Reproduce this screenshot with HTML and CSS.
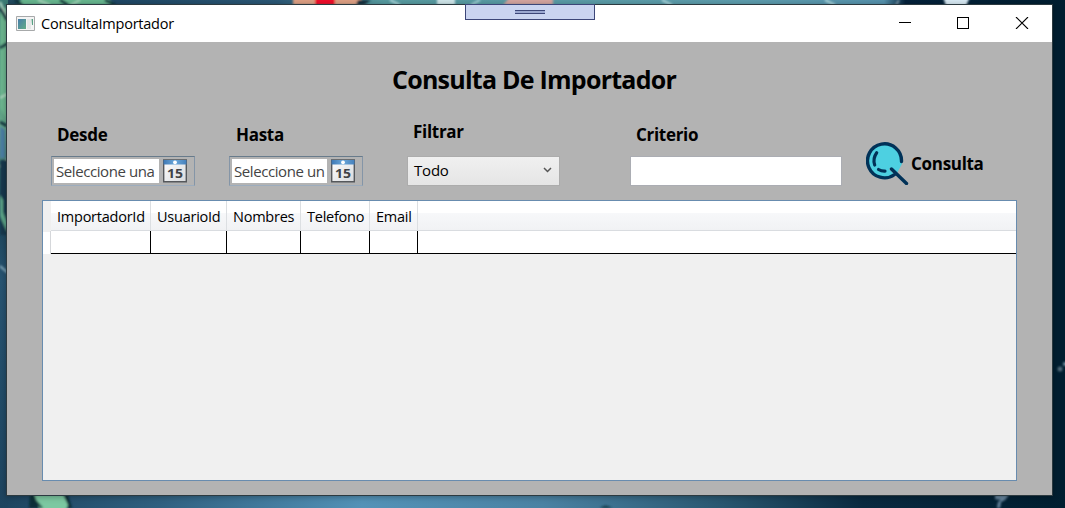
FILE: index.html
```html
<!DOCTYPE html>
<html lang="es">
<head>
<meta charset="utf-8">
<title>ConsultaImportador</title>
<link rel="stylesheet" href="styles.css">
</head>
<body>
<svg class="wallpaper" viewBox="0 0 1065 508" aria-hidden="true">
  <defs>
    <linearGradient id="top"><stop offset="0" stop-color="#234b5e"/><stop offset=".1" stop-color="#1e4663"/><stop offset=".26" stop-color="#2b5876"/><stop offset=".36" stop-color="#579ba0"/><stop offset=".7" stop-color="#5d9dad"/><stop offset=".83" stop-color="#5692ad"/><stop offset=".85" stop-color="#04223b"/><stop offset="1" stop-color="#001e30"/></linearGradient>
    <linearGradient id="bottom"><stop offset="0" stop-color="#1d445f"/><stop offset=".15" stop-color="#2f6080"/><stop offset=".34" stop-color="#5392b7"/><stop offset=".51" stop-color="#4a82a3"/><stop offset=".68" stop-color="#28566f"/><stop offset=".81" stop-color="#0a2a40"/><stop offset="1" stop-color="#001e30"/></linearGradient>
    <linearGradient id="left" x2="0" y2="1"><stop offset="0" stop-color="#3c7a74"/><stop offset=".25" stop-color="#65a889"/><stop offset=".42" stop-color="#1b4257"/><stop offset=".55" stop-color="#275472"/><stop offset="1" stop-color="#1d445f"/></linearGradient>
    <filter id="soft"><feGaussianBlur stdDeviation="1"/></filter>
  </defs>
  <rect width="1065" height="508" fill="#001e30"/>
  <rect width="1065" height="6" fill="url(#top)"/>
  <rect y="490" width="1065" height="18" fill="url(#bottom)"/>
  <rect width="8" height="508" fill="url(#left)"/>
  <g filter="url(#soft)">
    <path d="M0 8h7v112L0 108z" fill="#6db790"/>
    <path d="M0 2l8 18M0 98l7-4M0 167l8-8" stroke="#b7dcc7" stroke-width="2"/>
    <path d="M0 8l7 12M0 48l8-5M0 122l7 4" stroke="#0c3440" stroke-width="3"/>
    <path d="M0 126l5 4v28H0z" fill="#4c7ea4"/>
    <path d="M0 160h8v75H0z" fill="#15394d"/>
    <path d="M0 195l3 5v12l4 10v10L0 216z" fill="#5fa98b"/>
    <path d="M0 266l8 7" stroke="#8eb3c4" stroke-width="2"/>
    <path d="M22-3h85l8 8H18z" fill="#68b78f"/>
    <path d="M15 0l7 5M60 0l8 5M105 0l10 5" stroke="#0d343c" stroke-width="3"/>
    <path d="M38 0l12 5M80 0l-9 5" stroke="#a9d6be" stroke-width="2"/>
    <path d="M293-3h68v8h-68z" fill="#dea084"/>
    <path d="M315-3h20v8h-20z" fill="#f0082c"/>
    <path d="M358 0h13l-7 5h-8z" fill="#153240"/>
    <path d="M390 0l10 5M480 0l-9 5M662 0l10 5M825 0l10 5" stroke="#b2dbe0" stroke-width="2"/>
    <path d="M437-3h18v8h-18z" fill="#d0e6ea"/>
    <path d="M510-3h43v8h-50z" fill="#d5a5a0"/>
    <path d="M943-3h27l-4 9h-20z" fill="#d8eaf4"/>
    <path d="M899 0l-3 5" stroke="#91a9b7" stroke-width="1.5"/>
    <path d="M30 495h38l4 13H29z" fill="#092d38"/>
    <path d="M34 494h29l5 11-3 8H41z" fill="#7bc8a1"/>
    <path d="M33 498l9 10" stroke="#123a3c" stroke-width="2"/>
    <path d="M600 508q5-5 12 0z" fill="#153d4c"/>
    <path d="M995 495h14l-4 5-4 2-1 6h-3l1-6 3-2-6-1z" fill="#68869f"/>
    <circle cx="1060" cy="369" r="2.5" fill="#536c7c"/><circle cx="1065" cy="364" r="2" fill="#789aaa"/>
  </g>
</svg>

<div class="grip" aria-hidden="true"><i></i></div>
<main class="window">
  <header class="titlebar">
    <svg class="appicon" width="19" height="16" viewBox="0 0 19 16"><defs><linearGradient id="app" x2="1" y2="1"><stop stop-color="#477dab"/><stop offset="1" stop-color="#62ad86"/></linearGradient></defs><path d="M.5.5h18v14H.5z" fill="#f4f4f4" stroke="#a7a9aa"/><path d="M2 3h8v10H2z" fill="url(#app)"/><path d="M11 3h4v10h-4z" fill="#e6e8e8"/><path d="M15.500 3h1.500v6h-1z" fill="#58a184"/></svg>
    <span class="caption">ConsultaImportador</span>
    <svg class="controls" width="130" height="12" viewBox="0 0 130 12" fill="none" stroke="#000" shape-rendering="crispEdges"><path d="M0 5.500h12M58.500.5h11v11h-11z"/><path d="M117 0l12 12M129 0l-12 12" shape-rendering="auto" stroke-width="1.100"/></svg>
  </header>

  <h1>Consulta De Importador</h1>

  <section class="filters">
    <div class="field desde">
      <label>Desde</label>
      <div class="picker"><div class="date">Seleccione una</div>
        <svg class="calendar" width="24" height="24" viewBox="0 0 24 24"><use href="#cal"/></svg></div>
    </div>
    <div class="field hasta">
      <label>Hasta</label>
      <div class="picker"><div class="date">Seleccione un</div>
        <svg class="calendar" width="24" height="24" viewBox="0 0 24 24"><defs><linearGradient id="page" x2="1" y2="1"><stop stop-color="#fff"/><stop offset="1" stop-color="#d8dadd"/></linearGradient><linearGradient id="band"><stop stop-color="#3e78b4"/><stop offset=".5" stop-color="#6ca8da"/><stop offset="1" stop-color="#4580bc"/></linearGradient><g id="cal"><path d="M.7.700h22.600v22H.7z" fill="url(#page)" stroke="#55585c" stroke-width="1.400"/><path d="M.5.500h23v5H.5z" fill="url(#band)"/><path d="M0 .5h24" stroke="#6a6d70"/><circle cx="12" cy="3.300" r="1.900" fill="#fff"/><text class="day" x="4" y="19" textLength="16" lengthAdjust="spacingAndGlyphs">15</text></g></defs><use href="#cal"/></svg></div>
    </div>
    <div class="field filtrar">
      <label>Filtrar</label>
      <div class="combo"><span>Todo</span><svg width="9" height="6" viewBox="0 0 9 6"><path d="M1 1l3.500 3.500L8 1" fill="none" stroke="#555" stroke-width="1.500"/></svg></div>
    </div>
    <div class="field criterio">
      <label>Criterio</label>
      <input class="textbox" type="text" aria-label="Criterio">
    </div>
    <div class="search">
      <svg width="43" height="43" viewBox="0 0 43 43"><path d="M35.500 20A17 17 0 1 0 28.500 32.500L23 27l2-1 6 5 5-9z" fill="#4dd0e1"/><path d="M35.500 19.500A17 17 0 1 0 28.600 32.500M25.500 27L40.500 41.500" fill="none" stroke="#013258" stroke-width="3.400" stroke-linecap="round"/><path d="M10.700 10.700Q6.500 16.500 8.700 23M12.500 27.500q3 1.800 6.500 1.600" fill="none" stroke="#013258" stroke-width="3.200" stroke-linecap="round"/></svg>
      <span>Consulta</span>
    </div>
  </section>

  <section class="datagrid">
    <div class="gridrow head"><b></b><div>ImportadorId</div><div>UsuarioId</div><div>Nombres</div><div>Telefono</div><div>Email</div><div></div></div>
    <div class="gridrow data"><b></b><div></div><div></div><div></div><div></div><div></div><div></div></div>
  </section>
</main>
</body>
</html>
```
FILE: styles.css
```css
* { box-sizing: border-box; }
body {
  margin: 0;
  width: 1065px;
  height: 508px;
  overflow: hidden;
  padding: 4px 0 0 6px;
  font: 14.5px/20px "Open Sans", "Noto Sans", sans-serif;
  color: #000;
}
.wallpaper { position: absolute; inset: 0; width: 1065px; height: 508px; z-index: -1; }
.window {
  width: 1047px;
  height: 492px;
  border: 1px solid #2c3a40;
  background: #b3b3b3;
  box-shadow: 0 1px 6px rgba(0, 0, 0, .3);
}
.grip {
  position: absolute;
  left: 465px;
  top: 4px;
  width: 130px;
  height: 16px;
  border: 1px solid #3c4678;
  background: #cad4f0;
  display: flex;
  justify-content: center;
  padding-top: 5px;
}
.grip i { width: 30px; height: 4px; background: #9ba8d0; border: solid #3c4678; border-width: 1px 0; }
.titlebar { height: 37px; background: #fff; display: flex; align-items: center; padding: 0 23px 0 9px; }
.appicon { margin-right: 6px; }
.caption { letter-spacing: -.24px; white-space: nowrap; }
.controls { margin-left: auto; margin-top: -2px; }

h1 { margin: 17px 0 1px; height: 40px; font-size: 25px; line-height: 40px; font-weight: 700; padding-left: 385px; white-space: nowrap; letter-spacing: -.75px; }

.filters { display: flex; height: 100px; }
.field { flex: none; display: flex; flex-direction: column; padding-top: 23px; }
.field label { font-size: 17px; line-height: 24px; height: 33px; font-weight: 700; padding-left: 6px; letter-spacing: -.3px; }
.desde { width: 144px; margin-left: 44px; }
.hasta { width: 134px; margin-left: 34px; }
.hasta label { padding-left: 7px; }
.filtrar { width: 153px; margin-left: 44px; }
.filtrar label { line-height: 18px; }
.criterio { width: 212px; margin-left: 70px; }
.picker {
  height: 30px;
  border: 1px solid;
  border-color: #687b8b #8495a7 #9cacbd #8495a7;
  display: flex;
  justify-content: space-between;
  padding: 2px 7px 2px 2px;
}
.date { width: 105px; height: 24px; background: #fff; color: #444; padding-left: 2px; font-size: 15px; line-height: 25px; overflow: hidden; white-space: nowrap; letter-spacing: -.42px; }
.hasta .date { width: 95px; }
.day { font: 700 12px "Open Sans", sans-serif; fill: #404347; }
.combo {
  height: 30px;
  border: 1px solid #acacac;
  background: linear-gradient(#f0f0f0, #e5e5e5);
  display: flex;
  align-items: center;
  justify-content: space-between;
  padding: 0 7px 2px;
  letter-spacing: -.2px;
  font-size: 15px;
}
.combo span { margin-left: -1px; }
.textbox { height: 30px; width: 212px; background: #fff; border: 1px solid #abadb3; padding: 0 5px; }
.search { display: flex; align-items: flex-start; margin-left: 24px; padding-top: 42px; }
.search span { margin: 10px 0 0 2px; line-height: 24px; font-size: 17px; font-weight: 700; letter-spacing: -.3px; }

.datagrid { width: 975px; height: 281px; margin-left: 35px; border: 1px solid #688caf; background: #f0f0f0; }
.gridrow { display: grid; grid-template-columns: 8px 100px 76px 74px 69px 48px 1fr; }
.head { height: 30px; background: linear-gradient(#fff 0 40%, #f7f8fa 41%, #f1f2f4); border-bottom: 1px solid #d9dce0; letter-spacing: -.24px; }
.head b { background: #f0f0f0; }
.head div { border-right: 1px solid #dcdfe2; padding-left: 6px; line-height: 31px; white-space: nowrap; }
.head div:last-child, .data div:last-child { border-right: 0; }
.data { height: 23px; background: #fff; }
.data b { border-right: 1px solid #d5d7da; }
.data div { border: solid #000; border-width: 0 1px 1px 0; }
```
